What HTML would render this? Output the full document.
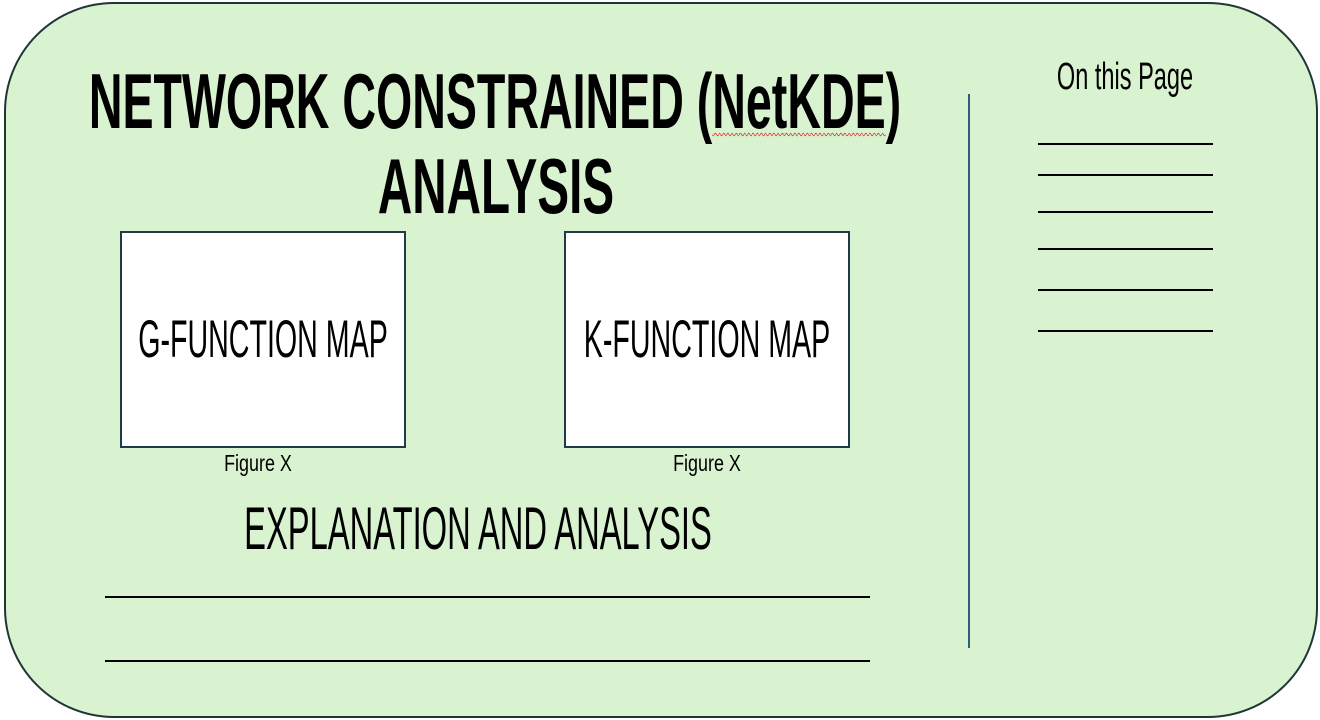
<!DOCTYPE html>
<html><head><meta charset="utf-8"><style>
html,body{margin:0;padding:0;}
body{width:1320px;height:720px;background:#fff;position:relative;overflow:hidden;font-family:"Liberation Sans",sans-serif;color:#000;}
.card{position:absolute;left:4px;top:2px;width:1310px;height:712px;border:2px solid #1e3636;border-radius:110px;background:#d9f2d0;}
.t{position:absolute;white-space:nowrap;line-height:1;transform-origin:center top;}
.box{position:absolute;width:282px;height:213px;background:#fff;border:2px solid #1f3a4a;}
.hl{position:absolute;height:2px;background:#000;}
.sl{position:absolute;left:1038px;width:175px;height:2px;background:#000;}
</style></head><body>
<div class="card"></div>
<div class="t" style="left:495px;top:62px;font-size:78px;font-weight:bold;transform:translateX(-50%) scaleX(0.597);">NETWORK CONSTRAINED (<span style="text-decoration:underline wavy #e03030;text-decoration-thickness:1px;text-underline-offset:4px;">NetKDE</span>)</div>
<div class="t" style="left:496px;top:147px;font-size:78px;font-weight:bold;transform:translateX(-50%) scaleX(0.61);">ANALYSIS</div>
<div class="box" style="left:120px;top:231px;"></div>
<div class="box" style="left:564px;top:231px;"></div>
<div class="t" style="left:263px;top:313px;font-size:53px;transform:translateX(-50%) scaleX(0.54);">G-FUNCTION MAP</div>
<div class="t" style="left:707px;top:313px;font-size:53px;transform:translateX(-50%) scaleX(0.54);">K-FUNCTION MAP</div>
<div class="t" style="left:258px;top:452px;font-size:23px;transform:translateX(-50%) scaleX(0.78);">Figure X</div>
<div class="t" style="left:707px;top:452px;font-size:23px;transform:translateX(-50%) scaleX(0.78);">Figure X</div>
<div class="t" style="left:478px;top:499px;font-size:60px;transform:translateX(-50%) scaleX(0.545);">EXPLANATION AND ANALYSIS</div>
<div class="hl" style="left:105px;top:596px;width:765px;"></div>
<div class="hl" style="left:105px;top:660px;width:765px;"></div>
<div style="position:absolute;left:968px;top:94px;width:2px;height:554px;background:#2e5e7e;"></div>
<div class="t" style="left:1125px;top:58px;font-size:38px;transform:translateX(-50%) scaleX(0.62);">On this Page</div>
<div class="sl" style="top:143px;"></div>
<div class="sl" style="top:174px;"></div>
<div class="sl" style="top:211px;"></div>
<div class="sl" style="top:248px;"></div>
<div class="sl" style="top:289px;"></div>
<div class="sl" style="top:330px;"></div>
</body></html>
